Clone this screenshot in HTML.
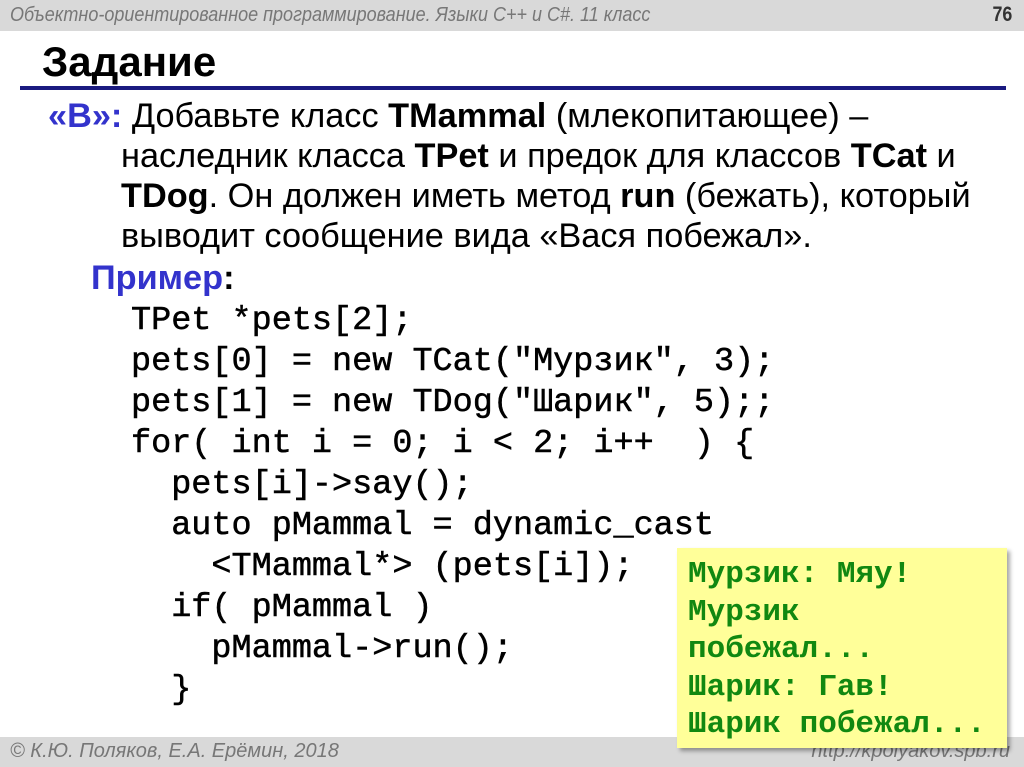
<!DOCTYPE html>
<html><head><meta charset="utf-8"><style>
body{margin:0;width:1024px;height:767px;position:relative;background:#fff;overflow:hidden;font-family:"Liberation Sans",Arial,sans-serif}
.hdr{position:absolute;left:0;top:0;width:1024px;height:31px;background:#d9d9d9}
.hdr .t{position:absolute;left:10px;top:4px;font-size:20px;font-style:italic;color:#777;transform:scaleX(.9);transform-origin:left;white-space:nowrap}
.hdr .n{position:absolute;right:12px;top:3px;font-size:21px;font-weight:bold;color:#333;transform:scaleX(.85);transform-origin:right}
.title{position:absolute;left:42px;top:38px;font-size:42px;font-weight:bold;color:#000;white-space:nowrap}
.line{position:absolute;left:20px;top:86px;width:986px;height:4px;background:#1a1a80}
.p{position:absolute;font-size:34.3px;color:#000;white-space:nowrap;left:0}
.b{font-weight:bold}
.blue{color:#3333cc;font-weight:bold}
.code{position:absolute;font-family:"Liberation Mono","Courier New",monospace;font-size:33.5px;color:#000;white-space:pre;-webkit-text-stroke:.5px #000;line-height:41px}
.box{position:absolute;left:677px;top:548px;width:330px;height:200px;background:#ffff99;box-shadow:3px 3px 4px rgba(0,0,0,.35)}
.box pre{margin:0;position:absolute;left:11px;top:8px;font-family:"Liberation Mono",monospace;font-size:31px;font-weight:bold;color:#118811;line-height:37.5px}
.ftr{position:absolute;left:0;top:737px;width:1024px;height:30px;background:#d9d9d9}
.ftr .l{position:absolute;left:10px;top:3px;font-size:20px;font-style:italic;color:#777}
.ftr .r{position:absolute;right:14px;top:3px;font-size:20px;font-style:italic;color:#777}
</style></head><body>
<div class="hdr"><div class="t">Объектно-ориентированное программирование. Языки C++ и C#. 11 класс</div><div class="n">76</div></div>
<div class="title">Задание</div>
<div class="line"></div>
<div class="p" style="left:48px;top:97px"><span class="blue">«B»:</span> Добавьте класс <span class="b">TMammal</span> (млекопитающее) –</div>
<div class="p" style="left:121px;top:137px">наследник класса <span class="b">TPet</span> и предок для классов <span class="b">TCat</span> и</div>
<div class="p" style="left:121px;top:177px"><span class="b">TDog</span>. Он должен иметь метод <span class="b">run</span> (бежать), который</div>
<div class="p" style="left:121px;top:217px">выводит сообщение вида «Вася побежал».</div>
<div class="p" style="left:91px;top:259px"><span class="blue">Пример</span><span class="b">:</span></div>
<div class="code" style="left:131px;top:301px">TPet *pets[2];
pets[0] = new TCat("Мурзик", 3);
pets[1] = new TDog("Шарик", 5);;
for( int i = 0; i &lt; 2; i++  ) {
  pets[i]-&gt;say();
  auto pMammal = dynamic_cast
    &lt;TMammal*&gt; (pets[i]);
  if( pMammal )
    pMammal-&gt;run();
  }</div>
<div class="ftr"><div class="l">© К.Ю. Поляков, Е.А. Ерёмин, 2018</div><div class="r">http://kpolyakov.spb.ru</div></div>
<div class="box"><pre>Мурзик: Мяу!
Мурзик
побежал...
Шарик: Гав!
Шарик побежал...</pre></div>
</body></html>
